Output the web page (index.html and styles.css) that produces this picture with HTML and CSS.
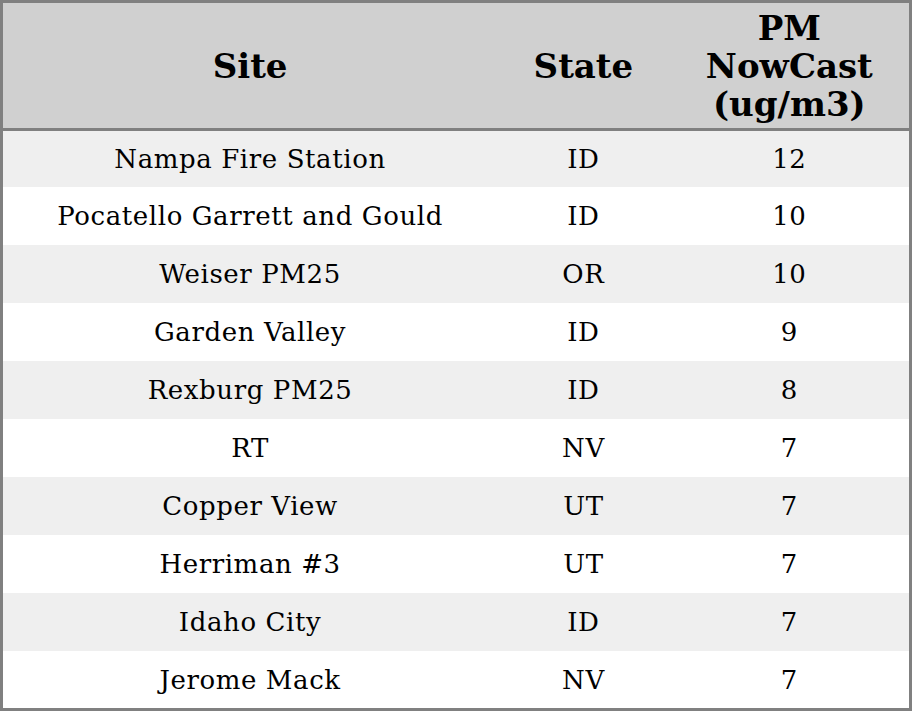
FILE: index.html
```html
<!DOCTYPE html>
<html>
<head>
<meta charset="utf-8">
<link rel="stylesheet" href="styles.css">
</head>
<body>
<table class="aq">
  <colgroup><col class="c-site"><col class="c-state"><col class="c-pm"></colgroup>
  <thead>
    <tr><th>Site</th><th>State</th><th class="pm">PM NowCast (ug/m3)</th></tr>
  </thead>
  <tbody>
    <tr><td>Nampa Fire Station</td><td>ID</td><td>12</td></tr>
    <tr><td>Pocatello Garrett and Gould</td><td>ID</td><td>10</td></tr>
    <tr><td>Weiser PM25</td><td>OR</td><td>10</td></tr>
    <tr><td>Garden Valley</td><td>ID</td><td>9</td></tr>
    <tr><td>Rexburg PM25</td><td>ID</td><td>8</td></tr>
    <tr><td>RT</td><td>NV</td><td>7</td></tr>
    <tr><td>Copper View</td><td>UT</td><td>7</td></tr>
    <tr><td>Herriman #3</td><td>UT</td><td>7</td></tr>
    <tr><td>Idaho City</td><td>ID</td><td>7</td></tr>
    <tr><td>Jerome Mack</td><td>NV</td><td>7</td></tr>
  </tbody>
</table>
</body>
</html>
```
FILE: styles.css
```css
html, body { margin: 0; padding: 0; background: #fff; }
.aq {
  width: 912px;
  table-layout: fixed;
  border-collapse: collapse;
  border: 3px solid #808080;
  font-family: "DejaVu Serif", serif;
  color: #000;
}
.c-site { width: 494px; }
.c-state { width: 172px; }
.c-pm { width: 240px; }
.aq th {
  background: #d0d0d0;
  font-size: 34px;
  font-weight: bold;
  line-height: 38px;
  height: 125px;
  padding: 0 20px;
  text-align: center;
  border-bottom: 3px solid #808080;
}
.aq td {
  font-size: 26px;
  letter-spacing: 0.6px;
  height: 58px;
  padding: 0;
  text-align: center;
}
.aq tbody tr:first-child td { height: 56px; }
.aq tbody tr:last-child td { height: 57px; }
.aq tbody tr:nth-child(odd) td { background: #efefef; }
```
